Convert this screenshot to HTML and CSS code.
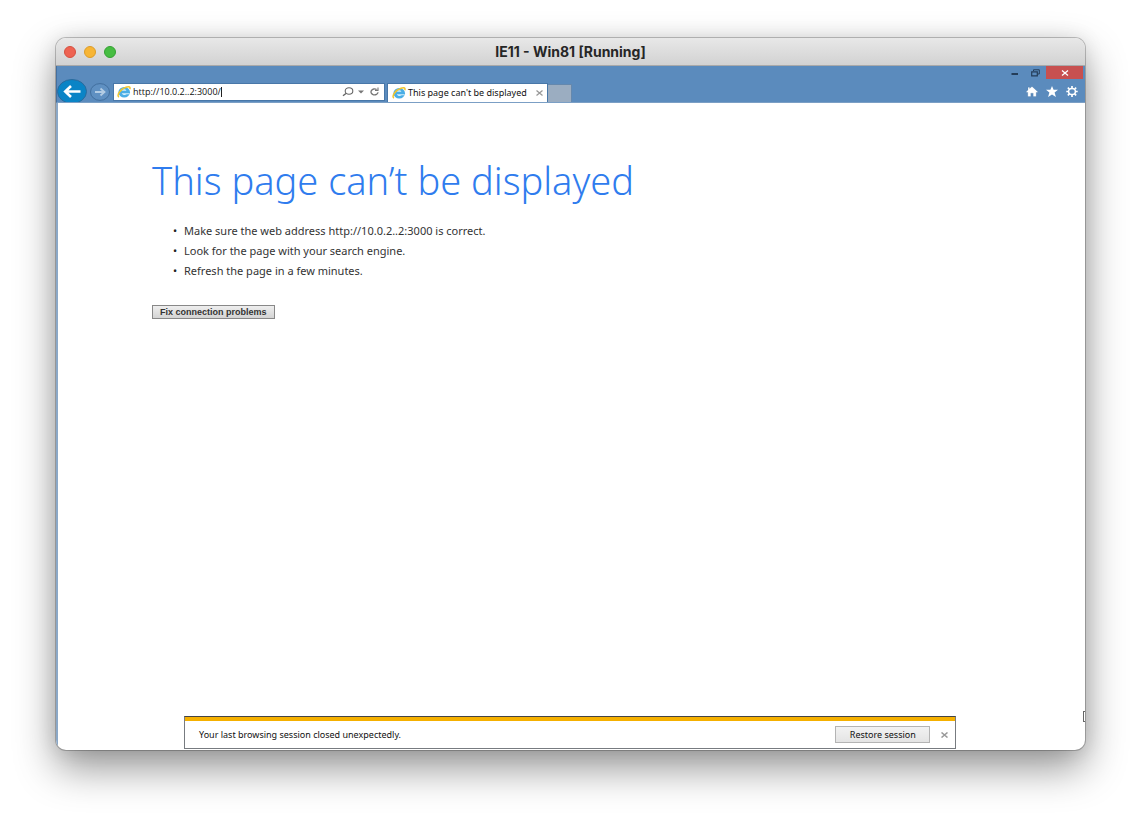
FILE: index.html
```html
<!DOCTYPE html>
<html lang="en">
<head>
<meta charset="utf-8">
<title>IE11 - Win81 [Running]</title>
<link rel="stylesheet" href="styles.css">
</head>
<body>
<svg class="defs" aria-hidden="true">
  <symbol id="ie" viewBox="0 0 14 12">
    <ellipse cx="7.2" cy="6.3" rx="5.8" ry="5.3" fill="#4aaee6"/>
    <path d="M5 4.8C5.2 3.8 6 3.3 7.2 3.3S9.2 3.8 9.3 4.8zM4.8 7.2H12.6L12.3 8.2H9.6C8.4 9.4 5.4 9.2 4.8 7.2z" fill="#d4effc"/>
    <path d="M2 11.2C-1 9.6 3.6 3 9 1.2C12.4 .2 13.6 1 12.8 3.2" fill="none" stroke="#f0c52e" stroke-width="1.5"/>
  </symbol>
</svg>
<main class="window">
  <header class="titlebar">
    <div class="lights">
      <button class="light red" aria-label="Close window"></button>
      <button class="light yellow" aria-label="Minimize window"></button>
      <button class="light green" aria-label="Zoom window"></button>
    </div>
    <h1 class="title">IE11 - Win81 [Running]</h1>
  </header>
  <section class="chrome">
    <nav class="nav">
      <button class="back" aria-label="Back">
        <svg width="30" height="24" viewBox="0 0 30 24"><ellipse cx="15" cy="12.5" rx="14.5" ry="12" fill="#0a84c6" stroke="#2b6b9d"/><path d="M23.5 12.5H8.5M14 7L8.2 12.5L14 18" fill="none" stroke="#fff" stroke-width="2.6"/></svg>
      </button>
      <button class="forward" aria-label="Forward">
        <svg width="20" height="18" viewBox="0 0 20 18"><ellipse cx="10" cy="9" rx="9.5" ry="8.4" fill="#5f90c2" stroke="#426f9e"/><path d="M5 9H14M10.5 5.5L14.5 9L10.5 12.5" fill="none" stroke="#b3cce4" stroke-width="1.8"/></svg>
      </button>
      <div class="address">
        <svg width="14" height="12"><use href="#ie"/></svg>
        <div class="field"><input class="url" type="text" aria-label="Address" value="http://10.0.2..2:3000/"><span class="caret"></span></div>
        <button class="tool" aria-label="Search"><svg width="12" height="10" viewBox="0 0 12 10"><ellipse cx="7" cy="4" rx="3.8" ry="3.2" fill="none" stroke="#666" stroke-width="1.1"/><path d="M4.3 6.2L1 8.8" stroke="#666" stroke-width="1.4"/></svg></button>
        <button class="tool" aria-label="Show address bar suggestions"><svg width="6" height="4" viewBox="0 0 6 4"><path d="M0 .5H6L3 3.5z" fill="#777"/></svg></button>
        <button class="tool reload" aria-label="Refresh"><svg width="10" height="10" viewBox="0 0 10 10"><path d="M6.6 2.5A3.5 3 0 1 0 8 5.2" fill="none" stroke="#777" stroke-width="1.3"/><path d="M5 3.4H8V.5" fill="none" stroke="#777" stroke-width="1.1"/></svg></button>
      </div>
      <div class="tab">
        <svg width="14" height="12"><use href="#ie"/></svg>
        <span class="tab-label">This page can't be displayed</span>
        <button class="tab-close" aria-label="Close tab"><svg width="7" height="6" viewBox="0 0 7 6"><path d="M.5 .5L6.5 5.5M6.5 .5L.5 5.5" stroke="#999" stroke-width="1.3"/></svg></button>
      </div>
      <button class="new-tab" aria-label="New tab"></button>
    </nav>
    <div class="right">
      <div class="controls">
        <button class="ctl" aria-label="Minimize"><svg width="8" height="8" viewBox="0 0 8 8"><path d="M.5 5H7" stroke="#243d59" stroke-width="1.8"/></svg></button>
        <button class="ctl" aria-label="Restore"><svg width="9" height="8" viewBox="0 0 9 8"><path d="M2.5 2V.8H8.3V5H6.5" fill="none" stroke="#243d59"/><path d="M.7 2.8H6.3V6.8H.7z" fill="none" stroke="#243d59" stroke-width="1.2"/></svg></button>
        <button class="ctl close" aria-label="Close"><svg width="8" height="6" viewBox="0 0 8 6"><path d="M1 .5L7 5.5M7 .5L1 5.5" stroke="#fff" stroke-width="1.3"/></svg></button>
      </div>
      <div class="icons">
        <button class="icon" aria-label="Home"><svg width="12" height="11" viewBox="0 0 12 11"><path d="M6 .4L11.8 5.8L11 6.8L10.2 6.2V10.6H7.2V7.2H4.8V10.6H1.8V6.2L1 6.8L.2 5.8L2 4.1V1.2H3.6V2.6z" fill="#fff" stroke="#3c6793" stroke-width=".2"/></svg></button>
        <button class="icon" aria-label="Favorites"><svg width="12" height="11" viewBox="0 0 12 11"><path d="M6 0L7.6 3.8H12L8.6 6.5L9.9 10.9L6 8.4L2.1 10.9L3.4 6.5L0 3.8H4.4z" fill="#fff"/></svg></button>
        <button class="icon" aria-label="Tools"><svg width="12" height="11" viewBox="0 0 12 11"><ellipse cx="6" cy="5.5" rx="3.4" ry="3.1" fill="none" stroke="#fff" stroke-width="1.5"/><path d="M6 0V2M6 9V11M.3 5.5H2M10 5.5H11.7M1.8 1.6L3.3 3M8.7 8L10.2 9.4M10.2 1.6L8.7 3M3.3 8L1.8 9.4" stroke="#fff" stroke-width="1.7"/></svg></button>
      </div>
    </div>
  </section>
  <section class="page">
    <div class="content">
      <h2 class="heading">This page can’t be displayed</h2>
      <ul class="tips">
        <li>Make sure the web address http://10.0.2..2:3000 is correct.</li>
        <li>Look for the page with your search engine.</li>
        <li>Refresh the page in a few minutes.</li>
      </ul>
      <button class="fix">Fix connection problems</button>
    </div>
    <div class="notice">
      <p class="message">Your last browsing session closed unexpectedly.</p>
      <button class="restore">Restore session</button>
      <button class="dismiss" aria-label="Dismiss"><svg width="7" height="6" viewBox="0 0 7 6"><path d="M.5 .5L6.5 5.5M6.5 .5L.5 5.5" stroke="#999" stroke-width="1.5"/></svg></button>
    </div>
    <span class="cursor"></span>
  </section>
</main>
</body>
</html>
```
FILE: styles.css
```css
* { box-sizing: border-box; }
body {
  margin: 0;
  min-height: 100vh;
  padding: 38px 56px 74px;
  display: flex;
  background: #fff;
  font-family: "Noto Sans", "Open Sans", sans-serif;
  color: #111;
}
button { border: 0; padding: 0; margin: 0; background: none; font: inherit; color: inherit; }
svg { display: block; flex: none; }
.defs { display: none; }
.window {
  flex: 1;
  min-width: 0;
  display: flex;
  flex-direction: column;
  border-radius: 10px;
  overflow: hidden;
  background: #fff;
  box-shadow: 0 0 0 1px rgba(0, 0, 0, .22), 0 18px 40px rgba(0, 0, 0, .42), 0 0 20px rgba(0, 0, 0, .1);
}
.titlebar {
  height: 28px;
  display: grid;
  grid-template-columns: 1fr auto 1fr;
  align-items: center;
  padding: 0 8px;
  background: linear-gradient(#e8e8e8, #d2d2d2);
  border-bottom: 1px solid #a9a9a9;
}
.lights { display: flex; gap: 8px; }
.light { width: 12px; height: 12px; border-radius: 50%; border: 1px solid; }
.red { background: #ee6352; border-color: #d5503f; }
.yellow { background: #f7b535; border-color: #dc9c28; }
.green { background: #47bd42; border-color: #35a033; }
.title { margin: 0; font: bold 14px/16px Inter, sans-serif; color: #262626; }
.chrome {
  height: 37px;
  display: flex;
  justify-content: space-between;
  background: #5b8bbd;
  border-bottom: 1px solid #7b9fc5;
  border-left: 1px solid #456f9e;
}
.nav { display: flex; align-items: flex-end; height: 36px; overflow: hidden; }
.back { height: 23px; }
.forward { margin: 0 4px 1px 3px; }
.address {
  width: 270px;
  height: 16px;
  margin: 0 4px 2px 0;
  padding: 0 4px 0 3px;
  display: flex;
  align-items: center;
  background: #fff;
  outline: 1px solid #4877a8;
}
.field { flex: 1; display: flex; align-items: center; padding-left: 2px; }
.url {
  width: 89px;
  height: 14px;
  border: 0;
  padding: 0;
  background: none;
  font: 9px/14px "Open Sans", sans-serif;
  color: #111;
  outline: 0;
}
.caret { width: 1px; height: 10px; background: #222; margin-left: -1px; }
.tool { margin-right: 4px; }
.reload { margin: 0 0 0 2px; }
.tab {
  height: 18px;
  width: 159px;
  padding: 0 4px;
  display: flex;
  align-items: center;
  background: #fff;
  outline: 1px solid #4877a8;
}
.tab-label { flex: 1; margin-left: 2px; font-size: 9px; line-height: 14px; white-space: nowrap; }
.new-tab { width: 24px; height: 18px; margin-left: 1px; background: #9badc1; border: 1px solid #6588ad; border-width: 1px 1px 0 0; }
.right { display: flex; flex-direction: column; }
.controls { display: flex; justify-content: flex-end; height: 13px; margin-right: 2px; }
.ctl { width: 21px; display: grid; place-items: center; }
.close { width: 37px; background: #c75050; }
.icons { display: flex; justify-content: flex-end; gap: 8px; padding: 7px 7px 0 0; }
.page {
  flex: 1;
  position: relative;
  display: flex;
  flex-direction: column;
  justify-content: space-between;
  border-left: 2px solid #8ba8c7;
}
.content { padding: 53px 94px 0; }
.heading { margin: 0 0 17px; font-weight: 300; font-size: 38px; line-height: 48px; color: #2f7cee; }
.tips { margin: 0 0 24px; padding: 0 0 0 32px; list-style: none; font-size: 11px; line-height: 20px; color: #333; }
.tips li::before { content: "•"; display: inline-block; width: 11px; margin-left: -11px; color: #222; }
.fix {
  display: block;
  height: 14px;
  padding: 0 7px;
  border: 1px solid #888;
  background: linear-gradient(#eee, #d4d4d4);
  font: bold 9px/12px "Liberation Sans", sans-serif;
  color: #333;
}
.notice {
  width: 75.2%;
  height: 33px;
  margin: 0 0 1px 126px;
  padding: 0 7px 0 14px;
  display: flex;
  align-items: center;
  border: 1px solid #777b80;
  border-top-color: #444;
  box-shadow: inset 0 4px #f5b000;
  font-size: 9px;
}
.message { flex: 1; margin: 4px 0 0; line-height: 16px; }
.restore { width: 95px; height: 17px; margin: 4px 11px 0 0; border: 1px solid #b4b4b4; background: linear-gradient(#f2f2f2, #e4e4e4); line-height: 14px; }
.dismiss { margin-top: 5px; }
.cursor { position: absolute; right: 0; bottom: 28px; width: 2px; height: 11px; border: 1px solid #666; border-right: 0; }
```
